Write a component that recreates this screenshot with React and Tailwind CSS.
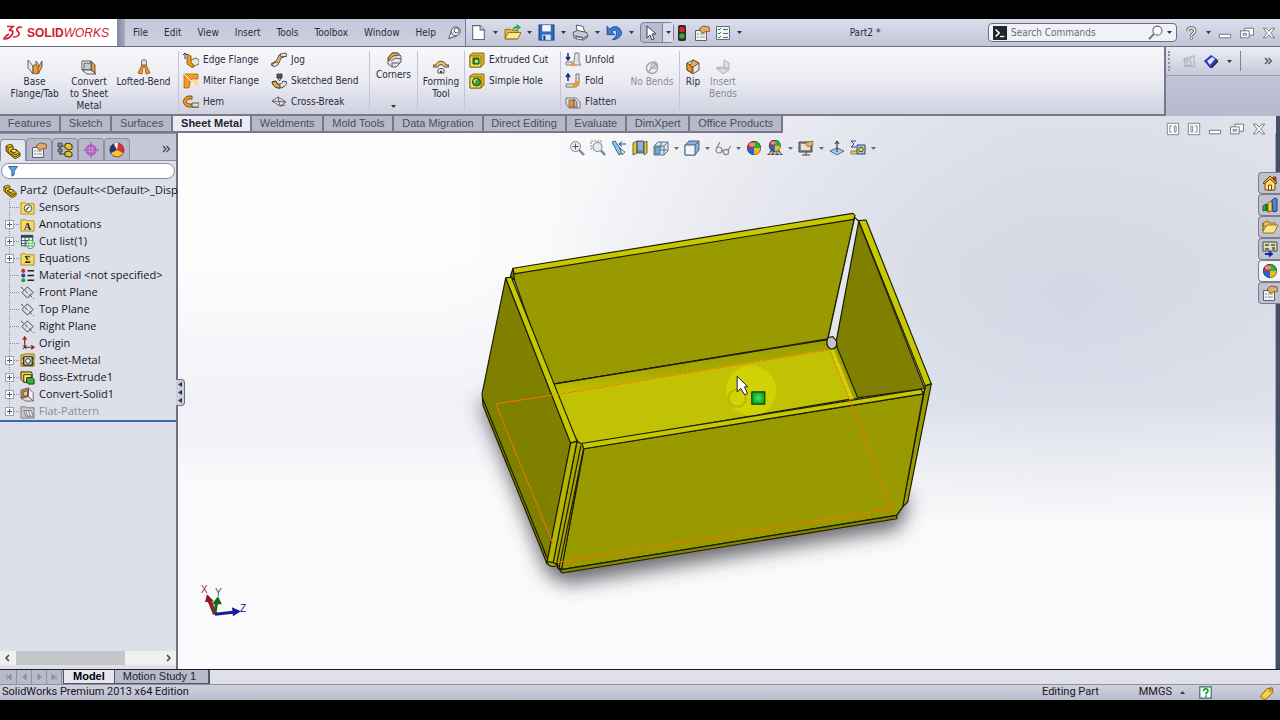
import clsx from "clsx";

const UI_FONT = "font-['DejaVu_Sans_Condensed','DejaVu_Sans',sans-serif]";
const TREE_FONT = "font-['Open_Sans','Noto_Sans',sans-serif]";
const STATUS_FONT = "font-['Roboto','Noto_Sans',sans-serif]";
const TAB_FONT = "font-['Liberation_Sans',Arial,sans-serif]";

const ball = (
  <g>
    <circle cx="8" cy="8" r="7" fill="#2b62c9" />
    <path d="M8 8V1a7 7 0 0 1 7 7z" fill="#2fae3b" />
    <path d="M8 8V1a7 7 0 0 0-7 7z" fill="#d8352a" />
    <path d="M8 8h7a7 7 0 0 1-7 7z" fill="#e9b928" />
    <circle cx="8" cy="8" r="6.6" fill="none" stroke="#000" strokeOpacity=".3" />
    <ellipse cx="6" cy="4.5" rx="3" ry="2" fill="#fff" opacity=".45" />
  </g>
);

const ICONS = {
  base: (
    <g stroke="#4a4a4a" strokeWidth=".8">
      <path d="M1 1l5 6v8L1 9z" fill="#e3e5ea" />
      <path d="M9 2l3 4v5L9 8z" fill="#e3e5ea" />
      <path d="M6 7l3-2 3 4v5l-3 1-3-1z" fill="#f59b20" />
      <path d="M11 9l4-7v6l-4 7z" fill="#f5a52c" />
    </g>
  ),
  convert: (
    <g stroke="#4a4a4a" strokeWidth=".9">
      <path d="M1 2h9v9H1z" fill="#fff" />
      <path d="M10 2l4 4v8l-4-3z" fill="#f19a25" />
      <path d="M3 4h7v7H3z" fill="#c9ccd4" />
      <path d="M1 11h9l5 4H6z" fill="#e8e9ee" />
    </g>
  ),
  lofted: (
    <g stroke="#8a4b00" strokeWidth=".8">
      <path d="M6 6L2 14l4 1 1-7h2l1 7 4-1-4-8z" fill="#f59b20" />
      <path d="M5.500 6V3a2.500 2.500 0 0 1 5 0v3z" fill="#dedfe5" stroke="#555" />
    </g>
  ),
  edge: (
    <g>
      <path d="M8 8l5-2 3 2v4l-7 3-5-4z" fill="#e8e6df" stroke="#5a4a2a" strokeWidth=".8" />
      <path d="M4 2l4 2v7l2 1 1 3-2 .5-5-3.500z" fill="#f59b20" stroke="#7a4b00" strokeWidth=".8" />
      <path d="M2 7V1M0 3l2-2 2 2" stroke="#1d2ea8" fill="none" />
    </g>
  ),
  miter: (
    <g>
      <path d="M1 1h14v5H8l-2 9H1z" fill="#f59b20" stroke="#8a4b00" strokeWidth=".6" />
      <path d="M1 1l6 6 8 8" stroke="#fff" fill="none" />
      <path d="M7 7h8v8z" fill="#fbd9a5" />
    </g>
  ),
  hem: (
    <g strokeWidth=".8" stroke="#5a3a10">
      <path d="M9 2H6a5.500 5.500 0 0 0 0 11h9v-3H6a2.500 2.500 0 0 1 0-5h3z" fill="#f59b20" />
      <path d="M9 9h7v4H9z" fill="#d9dae0" />
    </g>
  ),
  jog: (
    <g strokeWidth=".9" stroke="#57493a">
      <path d="M8 3l7-1 1 2-6 2-2 5-7 3-1-2 6-4z" fill="#f3b35a" />
      <path d="M9 2l6-1 1 3-6 1zM1 12l5-2 2 2-5 3z" fill="#e5e5e5" />
    </g>
  ),
  sketchedBend: (
    <g stroke="#333" strokeWidth=".9">
      <path d="M6 1h5v4H6z" fill="#555" />
      <path d="M7 5l1.500 3L10 5z" fill="#fff" />
      <path d="M1 9l4-1c1 4 6 4 7 0l4 1c-2 8-13 8-15 0z" fill="#e4e4e4" />
      <path d="M1 9l4-1c1 3 2 4 4 4v3C4 15 2 13 1 9z" fill="#f0a33c" />
    </g>
  ),
  crossBreak: (
    <g stroke="#555" strokeWidth=".9" fill="#e6e6ea">
      <path d="M1 7l6-4 8 5-6 4z" />
      <path d="M1 7l14 1M7 3l2 9M9 12l5-1" />
    </g>
  ),
  corners: (
    <g stroke="#4c4c4c" strokeWidth=".9">
      <path d="M2 6l4-5h6l3 3v6l-5 5H6l-4-3z" fill="#e4e5ea" />
      <path d="M2 6l4-5h6l2 2-7 1-4 5z" fill="#f2a02c" />
      <path d="M5 9l4-3 6 1M6 15V11l8 0" fill="none" />
    </g>
  ),
  forming: (
    <g stroke="#3c3c3c" strokeWidth=".9">
      <path d="M0 6h3c1-5 9-5 10 0h3v2h-5c0-3-6-3-6 0H0z" fill="#f1c65c" />
      <path d="M5 14v-3c0-2 6-2 6 0v3z" fill="#f4f4f4" />
      <path d="M7.500 14v-2h1v2" fill="#333" />
    </g>
  ),
  extrudedCut: (
    <g>
      <path d="M1 3l3-2h11v11l-3 3H1z" fill="#e0b818" stroke="#6f5800" strokeWidth=".8" />
      <path d="M1 4h11v11H1z" fill="#f7dd58" stroke="#6f5800" strokeWidth=".8" />
      <path d="M4 6h6v6H4z" fill="#2f8d2e" stroke="#174f12" />
      <path d="M6 8h3v3H6z" fill="#b9e36c" />
    </g>
  ),
  hole: (
    <g>
      <path d="M1 3l3-2h11v11l-3 3H1z" fill="#e0b818" stroke="#6f5800" strokeWidth=".8" />
      <path d="M1 4h11v11H1z" fill="#f7dd58" stroke="#6f5800" strokeWidth=".8" />
      <circle cx="7.500" cy="9" r="4" fill="#3fa23a" stroke="#174f12" />
      <path d="M8 5.500a3.500 3.500 0 0 0-3 5z" fill="#d5f0b0" />
    </g>
  ),
  unfold: (
    <g>
      <path d="M3 1v7M1 5l2 3 2-3" fill="none" stroke="#16297e" strokeWidth="1.500" />
      <path d="M10 1h4v9l2 3H1v-3h8z" fill="#e3e4e9" stroke="#666" strokeWidth=".8" />
      <path d="M6 11h4v3H6z" fill="#f29a1f" />
    </g>
  ),
  fold: (
    <g>
      <path d="M3 8V1M1 4l2-3 2 3" fill="none" stroke="#16297e" strokeWidth="1.500" />
      <path d="M11 1h3v8c0 4-2 5-5 5H1v-3h7c2 0 3-1 3-3z" fill="#e3e4e9" stroke="#555" strokeWidth=".8" />
      <path d="M7 11c3 0 4-1 4-3h3c0 4-2 6-6 6z" fill="#f29a1f" />
    </g>
  ),
  flatten: (
    <g stroke="#555" strokeWidth=".8">
      <path d="M1 4h10l4 4v6H4l-3-4z" fill="#e4e5ea" />
      <path d="M4 6h5v7H4z" fill="#f29a1f" />
      <path d="M9 5l3 3v5H9z" fill="#b9bcc5" />
    </g>
  ),
  noBends: (
    <g fill="none" stroke="#a5a6ad">
      <path d="M6 8l4-6 4 3-3 5z" fill="#dcdde3" />
      <circle cx="8" cy="9" r="5.500" strokeWidth="1.500" />
      <path d="M4 13l8-8" strokeWidth="1.500" />
    </g>
  ),
  rip: (
    <g strokeWidth=".9" stroke="#5a4630">
      <path d="M2 4l6-3 6 3v7l-6 4-6-4z" fill="#e7e8ed" />
      <path d="M2 4l5 3v7l-5-3z" fill="#f2951c" />
      <path d="M8 1l6 3-6 4-3-1z" fill="#f2b04e" />
      <path d="M8 8v6" />
    </g>
  ),
  insertBends: (
    <g stroke="#aaaab2" strokeWidth=".9" fill="#dcdde3">
      <path d="M9 1l5 3v6l-5-2z" />
      <path d="M1 9l5-1 8 3-6 4z" />
      <path d="M2 8c3 3 5 2 7 0" fill="none" />
    </g>
  ),
  newDoc: (
    <g>
      <path d="M2.500 1.500h7l4 4v9h-11z" fill="#fff" stroke="#63656f" />
      <path d="M9.500 1.500v4h4" fill="#dcdde5" stroke="#63656f" />
    </g>
  ),
  open: (
    <g>
      <path d="M1 5h5l1 1h6v8H1z" fill="#e9bd3d" stroke="#7e6210" strokeWidth=".8" />
      <path d="M4 8h12l-3 6H1z" fill="#fde88b" stroke="#7e6210" strokeWidth=".8" />
      <path d="M8 6c0-3 2-4 4-4V0l4 3-4 3V4c-2 0-3 1-4 2z" fill="#35a837" />
    </g>
  ),
  save: (
    <g>
      <path d="M1 1h14v14H1z" fill="#2f6cc6" stroke="#143a80" />
      <path d="M4 1h8v6H4z" fill="#f3f5fa" />
      <path d="M4 10h8v5H4z" fill="#dbe3f3" />
      <path d="M5 11h2v4H5z" fill="#143a80" />
    </g>
  ),
  print: (
    <g stroke="#55575f" strokeWidth=".9">
      <path d="M4 1l6 1 2 5-7 1z" fill="#fff" />
      <path d="M1 8l4-2 9 2 1 4-4 3-9-2z" fill="#c8cad3" />
      <path d="M3 11l8 2 4-2" fill="none" />
      <path d="M4 12l6 1v2l-6-1z" fill="#fff" />
    </g>
  ),
  undo: <path d="M1 2v8h7L5.500 7.500C8 4 12 6 9 12l-3 3c7-1 10-5 8-9C12 2 7 1 3.500 5z" fill="#3c7cd3" stroke="#1b448c" strokeWidth=".8" />,
  pointer: <path d="M4 1v12l3-3 2 5 2-1-2-5h4z" fill="#fff" stroke="#3c3d48" />,
  light: (
    <g>
      <rect x="4" y="0" width="8" height="16" rx="2" fill="#2a2a2a" />
      <circle cx="8" cy="4.500" r="2.800" fill="#d22a22" />
      <circle cx="8" cy="11" r="2.800" fill="#35a53a" />
    </g>
  ),
  props: (
    <g>
      <path d="M1.500 5.500h11v10h-11z" fill="#f3f3f6" stroke="#5e606a" />
      <path d="M3 9h2M6 9h5M3 12h2M6 12h5" stroke="#8a8c96" />
      <path d="M5 4l4-3 6 1 1 4-5 1-3 1z" fill="#e0ac68" stroke="#6d4b1d" strokeWidth=".8" />
    </g>
  ),
  options: (
    <g>
      <path d="M1.500 1.500h13v13h-13z" fill="#eef3f3" stroke="#54707a" />
      <path d="M3 4l1 1 2-2M3 8l1 1 2-2M3 12l1 1 2-2" fill="none" stroke="#28862e" />
      <path d="M8 4.500h5M8 8.500h5M8 12.500h5" stroke="#58616e" />
    </g>
  ),
  pin: (
    <g stroke="#50525e" strokeWidth="1.200" fill="#e6e7ef">
      <path d="M4 7l6 6-5 1-4 2 1-4z" />
      <circle cx="9.500" cy="6.500" r="5.500" />
      <circle cx="10.500" cy="5.500" r="3" fill="#fff" />
    </g>
  ),
  console: (
    <g>
      <path d="M0 0h16v16H0z" fill="#23252c" />
      <path d="M3 4l4 4-4 4" fill="none" stroke="#fff" strokeWidth="1.800" />
      <path d="M8 12h5" stroke="#fff" strokeWidth="1.500" />
    </g>
  ),
  search: (
    <g fill="none" stroke="#6c6f7b">
      <circle cx="10" cy="6" r="4.800" fill="#fafbff" strokeWidth="1.200" />
      <path d="M6.500 9.500L1 15" strokeWidth="2" />
    </g>
  ),
  help: (
    <g fill="none">
      <path d="M4.500 6c0-5 8-5 8-.5 0 3-4 3-4 6" stroke="#60626e" strokeWidth="3.800" />
      <path d="M4.500 6c0-5 8-5 8-.5 0 3-4 3-4 5.500" stroke="#fff" strokeWidth="1.600" />
      <circle cx="8.500" cy="14" r="1.400" fill="#fff" stroke="#60626e" />
    </g>
  ),
  minimize: <path d="M1.500 9.500h13v4h-13z" fill="#fff" stroke="#666874" />,
  restore: (
    <g fill="#fff" stroke="#666874">
      <path d="M5.500 2.500h10v8h-10z" />
      <path d="M.5 5.500h10v8H.5z" />
      <path d="M3.500 8.500h4v2h-4z" />
    </g>
  ),
  close: <path d="M1.500 2.500h3.500L8 6l3-3.500h3.500L10 8l4.500 5.500H11L8 10l-3 3.500H1.500L6 8z" fill="#fff" stroke="#666874" />,
  paneLeft: (
    <g fill="none" stroke="#777985">
      <path d="M1.500 1.500h13v13h-13z" fill="#fff" />
      <path d="M7 4.500H4.500v7H7M9.500 4.500h2v7h-2z" />
    </g>
  ),
  paneRight: (
    <g fill="none" stroke="#777985">
      <path d="M1.500 1.500h13v13h-13z" fill="#fff" />
      <path d="M9 4.500h2.500v7H9M4.500 4.500h2v7h-2z" />
    </g>
  ),
  drawing: (
    <g fill="none" stroke="#a5a7b3">
      <path d="M3 5l11-3v12H3z" />
      <path d="M1 7l10-2M5 8h5v5H5z" />
    </g>
  ),
  dimension: (
    <g>
      <path d="M1 8l7-6 7 5-8 8z" fill="#2733c4" />
      <path d="M4 8l5-4 3 2-5 6z" fill="#dfe4ff" />
      <path d="M7 15l8-8v2l-6 6z" fill="#111" />
    </g>
  ),
  part: (
    <g stroke="#3f3300" strokeWidth=".9">
      <path d="M1 3l5-2 2 2v3l4 1 3 3v3l-5 3-9-8z" fill="#ecc41d" />
      <path d="M1 3l2 2 5-2M3 5v4l7 5 5-3M8 6l-3 2 5 4 4-2" fill="none" />
      <path d="M5 8l3-2 4 1-2 3z" fill="#fbe887" />
    </g>
  ),
  config: (
    <g>
      <path d="M3 4v9M3 4h4M3 12h5" stroke="#333" fill="none" />
      <path d="M1 1h4v4H1zM1 7h4v3H1z" fill="#888" stroke="#333" strokeWidth=".7" />
      <path d="M8 2l4-1 3 2v4l-3 1-4-2zM8 10l4-1 3 2v3l-3 1-4-1z" fill="#e6c32a" stroke="#3c3000" />
    </g>
  ),
  target: (
    <g fill="none" stroke="#b14fc4" strokeWidth="1.300">
      <circle cx="8" cy="8" r="5" />
      <path d="M8 0v16M0 8h16M5 5l6 0 0 6-6 0z" strokeWidth="1" />
    </g>
  ),
  ball,
  appearance: (
    <g>
      <circle cx="8" cy="8" r="7" fill="#d8352a" stroke="#2c2c2c" strokeWidth=".6" />
      <path d="M8 8L2 12A7 7 0 0 1 4 2z" fill="#23367c" />
      <path d="M8 8l6 3a7 7 0 0 1-12 0z" fill="#f1c52b" />
      <path d="M8 8L5 1.500a7 7 0 0 1 4-.4z" fill="#fff" />
    </g>
  ),
  filter: <path d="M2 2h12L9.500 8v5l-3 2V8z" fill="#58a6e6" stroke="#1f3f8c" />,
  sensors: (
    <g>
      <path d="M1 3h5l1 1h8v11H1z" fill="#f7dc62" stroke="#b2901c" />
      <circle cx="8.500" cy="9" r="4" fill="#fff" stroke="#444" />
      <path d="M6 11l4-4" stroke="#333" strokeWidth="1.200" />
    </g>
  ),
  annotations: (
    <g>
      <path d="M1 3h5l1 1h8v11H1z" fill="#f7dc62" stroke="#b2901c" />
      <text x="8" y="13.500" textAnchor="middle" fontSize="11" fontWeight="700" fontFamily="Liberation Serif, serif" fill="#1a2c7c">A</text>
    </g>
  ),
  equations: (
    <g>
      <path d="M1 3h5l1 1h8v11H1z" fill="#f7dc62" stroke="#b2901c" />
      <text x="8" y="13" textAnchor="middle" fontSize="10" fontWeight="700" fontFamily="Liberation Serif, serif" fill="#222">Σ</text>
    </g>
  ),
  cutList: (
    <g>
      <path d="M1.500 1.500h12v11h-12z" fill="#fff" stroke="#30485e" />
      <path d="M1 1h13v3H1z" fill="#30485e" />
      <path d="M1 7h13M1 10h13M5.500 4v9M9.500 4v9" stroke="#30485e" />
      <circle cx="11" cy="11" r="4.500" fill="#dff3dd" stroke="#289a3c" />
      <path d="M8.500 10h2M12 10h2M8.500 12.500h2M12 12.500h1.500" stroke="#289a3c" strokeWidth="1.400" />
    </g>
  ),
  material: (
    <g>
      <circle cx="3.500" cy="3" r="2.200" fill="#d22" />
      <circle cx="3.500" cy="8" r="2.200" fill="#2340c8" />
      <circle cx="3.500" cy="13" r="2.200" fill="#22a036" />
      <path d="M8 3h7M8 8h7M8 13h7" stroke="#222" strokeWidth="1.600" />
    </g>
  ),
  plane: (
    <g fill="none" stroke="#3a3a3e">
      <path d="M2 8l6-6 6 6-6 6z" />
      <path d="M1 2l14 13" strokeDasharray="4 2" />
    </g>
  ),
  origin: (
    <g fill="none" stroke="#a01818">
      <path d="M5 12V1M3 4l2-3 2 3M5 12h10M12 10l3 2-3 2" strokeWidth="1.300" />
      <path d="M3 10l4 4M7 10l-4 4" stroke="#222" />
    </g>
  ),
  sheetMetal: (
    <g>
      <path d="M1 2h3l1-1h10v13H1z" fill="#f0cd3c" stroke="#8d7212" />
      <path d="M4 4h9v9H4z" fill="#d9d9d9" stroke="#222" strokeWidth="1.300" />
      <circle cx="8.500" cy="8.500" r="2.500" fill="#fff" stroke="#222" />
      <path d="M4 6H2M4 11H2M13 6h2M13 11h2" stroke="#222" />
    </g>
  ),
  boss: (
    <g stroke="#2e2a08">
      <path d="M1 2h11l1 2v9H4l-3-3z" fill="#f1d23d" />
      <path d="M4 5h8v8H4z" fill="#fbee9a" />
      <path d="M7 8h6l2 2v5H9l-2-2z" fill="#35b040" />
    </g>
  ),
  convertSolid: (
    <g stroke="#57493a" strokeWidth=".8">
      <path d="M1 3l8-2 1 9-9 2z" fill="#f7f7f7" />
      <path d="M9 1l5 5v9l-5-5z" fill="#f7f7f7" />
      <path d="M1 12l8-2 5 5-8 0z" fill="#dcdde3" />
      <path d="M2 4l7-2v8l-7 1z" fill="#e48b3b" />
      <path d="M4 5l4-1v5l-4 1z" fill="#f3c79b" />
    </g>
  ),
  flat: (
    <g stroke="#77787e">
      <path d="M1 3h5l1 1h8v11H1z" fill="#c9cad0" />
      <path d="M4 7h8l2 6H6zM6 7l2 6M9 7l2 6" fill="#ececf0" />
    </g>
  ),
  zoomFit: (
    <g fill="none" stroke="#7c8592">
      <circle cx="6.500" cy="6.500" r="5" fill="#e5edf4" />
      <path d="M10 10l5 5" strokeWidth="2.400" />
      <path d="M6.500 3.500v6M3.500 6.500h6" stroke="#4c5a6a" />
    </g>
  ),
  zoomArea: (
    <g fill="none" stroke="#7c8592">
      <path d="M1 1h10v8H1z" strokeDasharray="2 1" />
      <circle cx="7.500" cy="7" r="4.500" fill="#e5edf4" />
      <path d="M11 10.500l4 4.500" strokeWidth="2.400" />
    </g>
  ),
  prevView: (
    <g>
      <path d="M1 2l3-1 5 7 2 5-3 2z" fill="#8fc4e4" stroke="#2f5c7d" strokeWidth=".9" />
      <path d="M8 4h7M8 4l3-2.500M8 4l3 2.500" stroke="#27479a" fill="none" />
      <path d="M9 8l5 4-3 3z" fill="#dceaf3" stroke="#2f5c7d" strokeWidth=".8" />
    </g>
  ),
  section: (
    <g stroke="#4a4a30" strokeWidth=".8">
      <path d="M1 3l4-2v12l-4 2z" fill="#ecc531" />
      <path d="M5 1h7v12H5z" fill="#5c92c8" />
      <path d="M12 3l3-2v12l-3 2z" fill="#ecc531" />
      <path d="M6 3h5M6 5h5M6 7h5M6 9h5" stroke="#d3e6f6" />
    </g>
  ),
  viewOrient: (
    <g stroke="#48667e" strokeWidth=".9">
      <path d="M1 6l4-4h10v9l-4 4H1z" fill="#dbe8f3" />
      <path d="M1 6h10v9M11 6l4-4M5 10h9M8 2v6" fill="none" />
      <path d="M2 7h5v7H2z" fill="#79a8d4" />
    </g>
  ),
  display: (
    <g stroke="#3d5878" strokeWidth=".9">
      <path d="M1 5l4-4h10v9l-4 5H1z" fill="#86aede" />
      <path d="M1 5h10v10H1z" fill="#eff4fa" />
      <path d="M11 5l4-4" />
    </g>
  ),
  glasses: (
    <g fill="none" stroke="#84868d" strokeWidth="1.200">
      <circle cx="4" cy="10" r="3" />
      <circle cx="11" cy="12" r="2.600" />
      <path d="M7 10l1.500 1M1.500 8L5 2M13 10l3-4" />
    </g>
  ),
  scene: (
    <g>
      <path d="M0 15l4-5h8l4 5z" fill="#4a4a40" />
      <path d="M3 15l3-5M8 10v5M13 15l-3-5M1 13h14" stroke="#eee" strokeWidth=".8" />
      <g transform="translate(1 -1) scale(.85)">{ball}</g>
    </g>
  ),
  viewSettings: (
    <g>
      <path d="M1 2h13v10H1z" fill="#8a8c90" stroke="#3f4044" />
      <path d="M3 4h9v6H3z" fill="#e8e2c8" />
      <path d="M4 15h8M8 12v3" stroke="#3f4044" />
      <path d="M7 3l8-2v4l-5 2z" fill="#e3b06c" stroke="#775222" strokeWidth=".6" />
    </g>
  ),
  normal: (
    <g>
      <path d="M1 11l7-3 7 3-7 4z" fill="#a9cbe8" stroke="#38628c" strokeWidth=".9" />
      <path d="M8 12V1M6 4l2-3 2 3" fill="none" stroke="#222" />
    </g>
  ),
  sigmaDim: (
    <g>
      <path d="M6 1H1l3 3-3 3h5" fill="none" stroke="#3036a4" />
      <path d="M7 5h8v9H7z" fill="#a3c6e2" stroke="#2c4664" />
      <circle cx="11" cy="9.500" r="2.200" fill="#f0d257" stroke="#5b4a0d" />
      <path d="M1 11h6v3H1z" fill="#efcf48" stroke="#6a5510" strokeWidth=".7" />
    </g>
  ),
  home: (
    <g stroke="#6e3a05" strokeWidth=".9">
      <path d="M11 2h3v5h-3z" fill="#c23a20" />
      <path d="M3 8v7h10V8L8 4z" fill="#fbe07a" />
      <path d="M1 8l7-7 7 7-1 1-6-5-6 5z" fill="#f0b93c" />
      <path d="M6.500 10h3v5h-3z" fill="#fff6cf" />
    </g>
  ),
  library: (
    <g strokeWidth=".9">
      <path d="M1 9l3-2v6l-3 1zM4 7l2 1v7l-2-2z" fill="#30b54a" stroke="#0d5c1d" />
      <path d="M6 6l3-2 1 1v9l-4 1z" fill="#f1d541" stroke="#72600e" />
      <path d="M10 3l3-2 2 1v12l-4 1z" fill="#5684cd" stroke="#1b366e" />
    </g>
  ),
  folder: (
    <g stroke="#8b6b12" strokeWidth=".9">
      <path d="M1 4l5-2 1 2h6v3H1z" fill="#eec54a" />
      <path d="M1 4v10h11l4-8H5l-4 6z" fill="#fce68c" />
    </g>
  ),
  palette: (
    <g>
      <path d="M1 1h14v9H1z" fill="#dcdbb5" stroke="#444" />
      <path d="M3 3h4v2H3zM9 3h4v2H9zM3 7h4v2H3zM10 6h3v3h-3z" fill="#6f775f" />
      <path d="M3 13h6M7 10.500l3 2.500-3 2.500" stroke="#1523b0" strokeWidth="1.800" fill="none" />
    </g>
  ),
  statusHelp: (
    <g>
      <path d="M1 1h14v14H1z" fill="#f6fff6" stroke="#2b6c78" strokeWidth="1.400" />
      <path d="M5.500 6.500c0-4 6-4 5.500-.5 0 2-2.500 2-2.500 4" stroke="#149c2a" strokeWidth="2" fill="none" />
      <path d="M7.500 11.500h2v2h-2z" fill="#149c2a" />
    </g>
  ),
  tag: (
    <g>
      <path d="M1 11l7-8 6-1 1 5-8 8c-3 1-6-1-6-4z" fill="#f3c62d" stroke="#7c5c04" />
      <circle cx="12" cy="5" r="1.200" fill="#fff" stroke="#7c5c04" />
      <path d="M4 11l5-5M6 13l5-5" stroke="#fff0a8" />
    </g>
  ),
};

function Icon({ name, className = "size-4" }) {
  return (
    <svg viewBox="0 0 16 16" aria-hidden="true" className={clsx("shrink-0", className)}>
      {ICONS[name]}
    </svg>
  );
}

function Caret({ className }) {
  return (
    <svg viewBox="0 0 5 3" aria-hidden="true" className={clsx("h-[3px] w-[5px] shrink-0", className)}>
      <path d="M0 0h5L2.500 3z" fill="#33343e" />
    </svg>
  );
}

function Chevrons() {
  return (
    <svg viewBox="0 0 8 8" aria-hidden="true" className="size-2" fill="none" stroke="#44454f" strokeWidth="1.200">
      <path d="M1 1l3 3-3 3M4.500 1l3 3-3 3" />
    </svg>
  );
}

function Logo() {
  return (
    <div className="flex w-[117px] items-center gap-1 bg-white pl-[3px]">
      <svg viewBox="0 0 20 16" aria-hidden="true" className="h-[18px] w-5" fill="none" stroke="#d0202e" strokeWidth="1.700">
        <path d="M4 1.500h6L6 5.500" />
        <path d="M6 5.500c5-1 5 3 1 6.500-2 1.500-4 2-6 2 1-3 3-4 5-5" />
        <path d="M19 2.500c-4-1-6 1-5 3 1 1.500 3 2 2 4-.8 1.700-3 2.500-6 2.500" />
      </svg>
      <span className="text-xs text-[#d0202e] font-['Liberation_Sans',Arial,sans-serif]">
        <b>SOLID</b>
        <i>WORKS</i>
      </span>
    </div>
  );
}

const MENUS = ["File", "Edit", "View", "Insert", "Tools", "Toolbox", "Window", "Help"];
const QUICK = ["newDoc", "open", "save", "print", "undo"];

function TitleBar() {
  return (
    <header className="flex h-7 items-stretch border-b border-[#6a6b7b] bg-linear-to-b from-[#dcddec] to-[#c3c5d8]">
      <Logo />
      <div className="w-2 bg-linear-to-r from-[#85879f] to-[#a9abc2]" />
      <nav className="flex items-center border-r border-[#7c7d8e] bg-linear-to-b from-[#c4c6da] to-[#cfd0e1] pl-2 pr-1">
        <div className="flex gap-4">
          {MENUS.map((menu) => (
            <button key={menu} type="button">{menu}</button>
          ))}
        </div>
        <button type="button" aria-label="Pin menu" className="ml-3"><Icon name="pin" className="size-[13px]" /></button>
      </nav>
      <div className="flex items-center pl-1">
        {QUICK.map((name) => (
          <button key={name} type="button" aria-label={name} className="flex w-[34px] items-center gap-[6px]">
            <Icon name={name} className="size-[17px]" />
            <Caret />
          </button>
        ))}
        <button type="button" aria-label="Select" className="flex h-[21px] w-[34px] items-center justify-between rounded-sm border border-[#7f8092] bg-[#b9bbce] pl-[2px]">
          <Icon name="pointer" />
          <span className="flex h-full w-[11px] items-center justify-center border-l border-[#7f8092] bg-[#dcddea]"><Caret /></span>
        </button>
        <button type="button" aria-label="Rebuild" className="pr-1"><Icon name="light" /></button>
        <button type="button" aria-label="File properties" className="pr-[5px]"><Icon name="props" /></button>
        <button type="button" aria-label="Options" className="flex items-center gap-[6px]">
          <Icon name="options" />
          <Caret />
        </button>
      </div>
      <h1 className="flex-1 self-center text-center">Part2 *</h1>
      <label className="my-1 flex w-[189px] items-center gap-1 rounded-sm border border-[#6d6e7e] bg-[#f1f2f8] px-1">
        <Icon name="console" className="size-[14px]" />
        <input type="text" aria-label="Search Commands" placeholder="Search Commands" className="w-0 flex-1 outline-none placeholder:text-[#6a6b76]" />
        <Icon name="search" className="size-[15px]" />
        <Caret />
      </label>
      <div className="flex items-center pl-[7px]">
        <button type="button" aria-label="Help" className="mr-[3px] flex items-center gap-2"><Icon name="help" className="size-[14px]" /><Caret /></button>
        <WindowButtons />
      </div>
    </header>
  );
}

function WindowButtons() {
  return ["minimize", "restore", "close"].map((name) => (
    <button key={name} type="button" aria-label={name} className="flex w-[22px] justify-center">
      <Icon name={name} className="size-[14px]" />
    </button>
  ));
}

function BigButton({ icon, lines, disabled, className, children }) {
  return (
    <button
      type="button"
      disabled={disabled}
      className={clsx("flex flex-col items-center leading-3", disabled && "text-[#8a8b95]", className)}
    >
      <Icon name={icon} className="mb-px size-4" />
      {lines.map((line) => (
        <span key={line} className="whitespace-nowrap">{line}</span>
      ))}
      {children}
    </button>
  );
}

function SmallColumn({ items, className }) {
  return (
    <div className={clsx("flex flex-col pt-[2px]", className)}>
      {items.map(([icon, label]) => (
        <button key={label} type="button" className="flex h-[21px] items-center gap-1 whitespace-nowrap">
          <Icon name={icon} />
          {label}
        </button>
      ))}
    </div>
  );
}

function Rule() {
  return <div className="my-1 w-px shrink-0 bg-[#c3c5d4]" />;
}

function Ribbon() {
  return (
    <div className="flex h-[69px] bg-[#b9bbd0]">
      <div className="flex flex-1 items-stretch border-r-2 border-b-2 border-[#777888] bg-linear-to-b from-[#f7f7fb] via-[#ebecf3] to-[#cfd1e0]">
        <BigButton icon="base" lines={["Base", "Flange/Tab"]} className="w-[69px] pt-3" />
        <BigButton icon="convert" lines={["Convert", "to Sheet", "Metal"]} className="w-10 pt-3" />
        <BigButton icon="lofted" lines={["Lofted-Bend"]} className="w-[69px] pt-3" />
        <Rule />
        <SmallColumn className="w-[88px] pl-1" items={[["edge", "Edge Flange"], ["miter", "Miter Flange"], ["hem", "Hem"]]} />
        <SmallColumn className="w-[102px] pl-1" items={[["jog", "Jog"], ["sketchedBend", "Sketched Bend"], ["crossBreak", "Cross-Break"]]} />
        <Rule />
        <BigButton icon="corners" lines={["Corners"]} className="w-[47px] pt-[5px]">
          <Caret className="mt-6" />
        </BigButton>
        <Rule />
        <BigButton icon="forming" lines={["Forming", "Tool"]} className="w-[46px] pt-3" />
        <Rule />
        <SmallColumn className="w-[95px] pl-1" items={[["extrudedCut", "Extruded Cut"], ["hole", "Simple Hole"]]} />
        <Rule />
        <SmallColumn className="w-16 pl-1" items={[["unfold", "Unfold"], ["fold", "Fold"], ["flatten", "Flatten"]]} />
        <BigButton icon="noBends" lines={["No Bends"]} disabled className="w-[54px] pt-3" />
        <Rule />
        <BigButton icon="rip" lines={["Rip"]} className="w-[26px] pt-3" />
        <BigButton icon="insertBends" lines={["Insert", "Bends"]} disabled className="w-[34px] pt-3" />
      </div>
      <div className="w-[114px] bg-linear-to-b from-[#c9cbdd] to-[#b7b9cf]">
        <div className="flex h-[29px] items-center border-b border-[#9a9bad] bg-linear-to-b from-[#eceef6] to-[#c6c8da] pl-[2px] pr-2">
          <div className="mr-3 h-5 border-l-2 border-dotted border-[#9091a3]" />
          <button type="button" aria-label="Drawing view"><Icon name="drawing" className="size-[14px]" /></button>
          <button type="button" aria-label="Smart dimension" className="ml-[7px] flex items-center gap-2"><Icon name="dimension" /><Caret /></button>
          <div className="ml-2 h-5 w-px bg-[#7d7e8f]" />
          <button type="button" aria-label="More" className="ml-auto"><Chevrons /></button>
        </div>
      </div>
    </div>
  );
}

const TABS = ["Features", "Sketch", "Surfaces", "Sheet Metal", "Weldments", "Mold Tools", "Data Migration", "Direct Editing", "Evaluate", "DimXpert", "Office Products"];

function CommandTabs() {
  return (
    <div className={clsx("flex w-[783px] text-[11px]", TAB_FONT)}>
      {TABS.map((tab) => (
        <button
          key={tab}
          type="button"
          className={clsx(
            "h-[17px] flex-auto border-r-2 border-b-2 border-[#777888] px-[7px] leading-[15px] whitespace-nowrap",
            tab === "Sheet Metal" ? "bg-[#ebecf3] font-bold text-[#22232b]" : "bg-[#b7b9ca] text-[#4c4d5b]"
          )}
        >
          {tab}
        </button>
      ))}
    </div>
  );
}

const TREE = [
  { label: "Sensors", icon: "sensors" },
  { label: "Annotations", icon: "annotations", expandable: true },
  { label: "Cut list(1)", icon: "cutList", expandable: true },
  { label: "Equations", icon: "equations", expandable: true },
  { label: "Material <not specified>", icon: "material" },
  { label: "Front Plane", icon: "plane" },
  { label: "Top Plane", icon: "plane" },
  { label: "Right Plane", icon: "plane" },
  { label: "Origin", icon: "origin" },
  { label: "Sheet-Metal", icon: "sheetMetal", expandable: true },
  { label: "Boss-Extrude1", icon: "boss", expandable: true },
  { label: "Convert-Solid1", icon: "convertSolid", expandable: true },
  { label: "Flat-Pattern", icon: "flat", expandable: true, muted: true },
];

function FeatureTree() {
  return (
    <aside className="flex w-[178px] shrink-0 flex-col border-r-2 border-[#6f7182] bg-[#dde0e9]">
      <div className="flex items-end border-t border-b border-t-[#8d8fa6] border-b-[#8d8fa0] bg-[#c6c8d8] pt-1">
        {["part", "props", "config", "target", "appearance"].map((name, i) => (
          <button
            key={name}
            type="button"
            aria-label={name}
            className={clsx("flex h-[22px] w-[26px] items-center justify-center rounded-t-sm border border-b-0 border-[#8d8fa0]", i === 0 ? "-mb-px bg-[#e6e8f0]" : "bg-[#b7b9cb]")}
          >
            <Icon name={name} />
          </button>
        ))}
        <button type="button" aria-label="Expand tabs" className="ml-auto mr-[6px] self-center"><Chevrons /></button>
      </div>
      <label className="mx-px my-[2px] flex h-4 items-center rounded-full border border-[#8c8e9e] bg-white pl-[5px]">
        <Icon name="filter" className="size-3" />
        <input type="text" aria-label="Filter tree" className="w-0 flex-1 outline-none" />
      </label>
      <div className={clsx("pt-px text-[11px] text-[#15161c]", TREE_FONT)}>
        <div className="flex h-[17px] items-center gap-[3px] pl-[3px] whitespace-pre">
          <Icon name="part" className="size-[14px]" />
          {"Part2  (Default<<Default>_Disp"}
        </div>
        <ul className="relative before:absolute before:top-0 before:bottom-2 before:left-[9px] before:border-l before:border-dotted before:border-[#8b8c96]">
          {TREE.map((item) => (
            <li key={item.label} className={clsx("flex h-[17px] items-center whitespace-nowrap", item.muted && "text-[#8b8d97]")}>
              <span className="relative flex w-5 items-center pl-[5px] after:absolute after:left-[10px] after:w-[9px] after:border-t after:border-dotted after:border-[#8b8c96]">
                {item.expandable && (
                  <button type="button" aria-label={`Expand ${item.label}`} className="relative z-10 flex size-[9px] items-center justify-center border border-[#a0a1ab] bg-white">
                    <svg viewBox="0 0 5 5" className="size-[5px]" stroke="#555661" aria-hidden="true"><path d="M0 2.500h5M2.500 0v5" /></svg>
                  </button>
                )}
              </span>
              <Icon name={item.icon} className="mr-1 size-[15px]" />
              {item.label}
            </li>
          ))}
        </ul>
        <div className="h-[2px] bg-[#3b67ab]" />
      </div>
      <div className="mt-auto mb-1 flex h-[14px] items-center bg-[#f0f0f2] px-1">
        <button type="button" aria-label="Scroll left"><ScrollMark d="M5 1L2 4l3 3" /></button>
        <div className="ml-1 h-full w-[109px] bg-[#c6c7ca]" />
        <button type="button" aria-label="Scroll right" className="ml-auto"><ScrollMark d="M3 1l3 3-3 3" /></button>
      </div>
    </aside>
  );
}

function ScrollMark({ d }) {
  return (
    <svg viewBox="0 0 8 8" className="size-2" fill="none" stroke="#444" strokeWidth="1.500" aria-hidden="true">
      <path d={d} />
    </svg>
  );
}

const VIEW_TOOLS = [
  ["zoomFit"], ["zoomArea"], ["prevView"], ["section"], ["viewOrient", true], ["display", true],
  ["glasses", true], ["ball"], ["scene", true], ["viewSettings", true], ["normal"], ["sigmaDim", true],
];

// Box model, drawn back to front
function Model() {
  return (
    <svg viewBox="178 133 1098 535" className="absolute inset-0 h-full w-full" role="img" aria-label="Sheet metal box">
      <defs>
        <linearGradient id="bend" x1="0" y1="0" x2=".08" y2="1">
          <stop offset="0" stopColor="#9a9a00" />
          <stop offset=".6" stopColor="#a8a800" />
          <stop offset="1" stopColor="#c2c204" />
        </linearGradient>
        <radialGradient id="green">
          <stop offset="0" stopColor="#4fe060" />
          <stop offset="1" stopColor="#0aa826" />
        </radialGradient>
        <filter id="soft" x="-20%" y="-20%" width="140%" height="140%"><feGaussianBlur stdDeviation="28" /></filter>
      </defs>
      <g transform="translate(470 200) scale(.33333)" stroke="#1c1c00" strokeWidth="3.500" strokeLinejoin="round">
        <path d="M30 600L235 1125 300 1150 1290 985 1320 900 1000 700 300 600z" fill="#3a3a40" opacity=".75" stroke="none" filter="url(#soft)" />
        <path d="M126 215L1155 55 1075 415 245 552z" fill="#999900" />
        <path d="M130 203L1150 38l7 6-4 12L133 220z" fill="#c6c800" />
        <path d="M130 203l-8 24 12 12z" fill="#808000" />
        <path d="M255 550L1075 417l12 28 18-5 62 152L330 734l-80-150z" fill="#c2c204" />
        <path d="M257 552L1073 418l8 27L270 580z" fill="url(#bend)" stroke="none" />
        <path d="M255 550L1075 417" />
        <path d="M1085 448l18-8 62 152-25 5z" fill="#a3a300" stroke="none" />
        <path d="M1083 449l10-4 60 151-13 2z" fill="#d0d010" stroke="none" />
        <path d="M1156 50l14 14-68 356-2 18-14 6-13-12 4-24z" fill="#e3e5ef" />
        <path d="M1075 412q-8 26 10 34 20-2 17-24l-12-14z" fill="#bfc1cf" />
        <path d="M1168 62l198 502-201 28-62-152-2-20z" fill="#808000" />
        <path d="M1168 60l22-2 196 492-18 6z" fill="#c6c800" />
        <circle cx="845" cy="570" r="75" fill="#d8d804" stroke="none" opacity=".65" />
        <circle cx="803" cy="593" r="26" fill="none" stroke="#b3b300" strokeWidth="6" opacity=".8" />
        <path d="M1368 556l18-6-71 355-15 14-18 26-10-10z" fill="#999900" />
        <path d="M1368 558l-66 350" />
        <path d="M343 745L1362 580l-62 340-18 25L275 1108z" fill="#999900" />
        <path d="M330 730L1356 566l6 14L343 745z" fill="#c6c800" />
        <path d="M275 1108L1282 945v10L278 1118l-12-14z" fill="#858500" />
        <path d="M322 724l15 6 5 15-66 360-12-2 0-14-16 8z" fill="#a8a800" />
        <path d="M334 735l-74 360M342 745l-74 358" />
        <path d="M108 232l195 496-71 362L40 615l-3-35z" fill="#808000" />
        <path d="M38 592L232 1072" fill="none" />
        <path d="M108 232l17-2 197 492-19 6z" fill="#c6c800" />
        <path d="M303 728l19-6-72 368-18-5z" fill="#b4b600" />
        <path d="M230 1083q6 20 36 14l-14-10z" fill="#a8a800" />
        <g fill="none" stroke="#f57600" strokeWidth="3">
          <path d="M250 584L78 610l172 420M1140 595l127 330L262 1086" />
          <path d="M262 582L1080 448l60 148" strokeDasharray="12 4" />
        </g>
        <rect x="847" y="574" width="39" height="37" fill="url(#green)" stroke="#05420f" />
        <path d="M803 527v47l11-10 12 19 8-4-9-20h10z" fill="#fff" stroke="#222" strokeWidth="3" />
      </g>
      <g strokeWidth="4" fill="none">
        <path d="M215 614l-6-15" stroke="#a01c24" />
        <path d="M205 602l2-8 7 7z" fill="#8a1820" />
        <path d="M215 613l2-13" stroke="#0f6a1c" strokeWidth="3" />
        <path d="M212 604l6-8 4 8z" fill="#0f6a1c" />
        <path d="M215 614l18-2" stroke="#1b1b9a" strokeWidth="3" />
        <path d="M232 607l9 4-8 5z" fill="#1b1b9a" />
      </g>
      <g fontSize="10" fontFamily="Liberation Sans, sans-serif">
        <text x="201" y="593" fill="#b01c2c">X</text>
        <text x="215" y="596" fill="#2a6a34">Y</text>
        <text x="240" y="612" fill="#22227c">Z</text>
      </g>
    </svg>
  );
}

function GraphicsArea() {
  return (
    <main className="relative flex-1 border-r border-[#a7a9b8]">
      <Model />
      <div className="absolute inset-x-0 top-[7px] flex justify-center pr-2">
        <div className="flex items-center gap-[5px]">
          {VIEW_TOOLS.map(([name, menu]) => (
            <button key={name} type="button" aria-label={name} className="flex items-center gap-[5px]">
              <Icon name={name} />
              {menu && <Caret className="opacity-70" />}
            </button>
          ))}
        </div>
      </div>
      <div className="absolute -top-[11px] right-[5px] flex items-center">
        {["paneLeft", "paneRight"].map((name) => (
          <button key={name} type="button" aria-label={name} className="flex w-[21px] justify-center"><Icon name={name} className="size-[14px]" /></button>
        ))}
        <WindowButtons />
      </div>
      <button type="button" aria-label="Collapse panel" className="absolute top-[246px] -left-[2px] flex h-[27px] w-[9px] flex-col items-center justify-around rounded-r-sm border border-l-0 border-[#6f7182] bg-[#cdcfdd]">
        {[0, 1, 2].map((i) => (
          <svg key={i} viewBox="0 0 4 5" className="h-[5px] w-1" aria-hidden="true"><path d="M4 0v5L0 2.500z" fill="#33343e" /></svg>
        ))}
      </button>
    </main>
  );
}

function TaskPane() {
  return (
    <div className="absolute top-14 right-0 flex w-[22px] flex-col">
      {["home", "library", "folder", "palette", "ball", "props"].map((name) => (
        <button
          key={name}
          type="button"
          aria-label={name}
          className={clsx("flex h-[22px] items-center justify-center rounded-l-sm border border-r-0 border-[#7b7d8f]", name === "ball" ? "bg-[#f3f4f8]" : "bg-[#c0c2d1]")}
        >
          <Icon name={name} />
        </button>
      ))}
    </div>
  );
}

function DocumentTabs() {
  return (
    <div className={clsx("flex h-[15px] border-t border-[#1d1e24] bg-[#e0e0ea] text-[11px] leading-[13px]", TAB_FONT)}>
      <div className="flex bg-[#b9bbc9] pl-[2px] pr-px">
        {["M2 1v6M6 1L3 4l3 3z", "M6 1L3 4l3 3z", "M3 1l3 3-3 3z", "M6 1v6M2 1l3 3-3 3z"].map((d) => (
          <button key={d} type="button" aria-label="Tab navigation" className="flex w-[15px] items-center justify-center border-r border-[#8f91a2]">
            <svg viewBox="0 0 8 8" className="size-2" stroke="#8d8fa0" fill="#8d8fa0" aria-hidden="true"><path d={d} /></svg>
          </button>
        ))}
      </div>
      <button type="button" className="border-x border-b border-[#55566a] bg-[#e6e7f0] px-[9px] font-bold text-black">Model</button>
      <button type="button" className="border-r-2 border-b border-[#55566a] bg-[#b9bbcc] pr-3 pl-2 text-[#22232b]">Motion Study 1</button>
    </div>
  );
}

function StatusBar() {
  return (
    <footer className={clsx("flex h-4 items-center border-t border-[#8f91a2] bg-linear-to-b from-[#d0d1de] to-[#bbbccb] px-[2px] text-[11px] text-[#15161c]", STATUS_FONT)}>
      <span className="flex-1">SolidWorks Premium 2013 x64 Edition</span>
      <span className="mr-10">Editing Part</span>
      <button type="button" className="mr-[14px] flex items-center gap-2">
        MMGS
        <Caret className="rotate-180" />
      </button>
      <button type="button" aria-label="Quick tips" className="mr-12"><Icon name="statusHelp" className="size-[13px]" /></button>
      <button type="button" aria-label="Tags" className="mr-1"><Icon name="tag" className="size-[14px]" /></button>
    </footer>
  );
}

export default function App() {
  return (
    <div className="flex min-h-screen flex-col bg-black pt-[19px] pb-5">
      <div className={clsx("flex flex-1 flex-col text-[10px] text-[#2a2b3d]", UI_FONT)}>
        <TitleBar />
        <Ribbon />
        <section className="relative flex flex-1 flex-col border-r-4 border-[#465064] bg-[linear-gradient(to_bottom,transparent_52%,#faf9fb_74%),linear-gradient(to_bottom,transparent_25%,rgb(222_228_240/0.5)_58%,transparent_70%),radial-gradient(ellipse_42%_60%_at_84%_35%,#d2d6e2,transparent),linear-gradient(to_right,#fefcfd_35%,#e6e8f0_80%)]">
          <CommandTabs />
          <div className="flex flex-1">
            <FeatureTree />
            <GraphicsArea />
          </div>
          <div className="absolute inset-y-0 -right-1 w-0">
            <TaskPane />
          </div>
        </section>
        <DocumentTabs />
        <StatusBar />
      </div>
    </div>
  );
}
